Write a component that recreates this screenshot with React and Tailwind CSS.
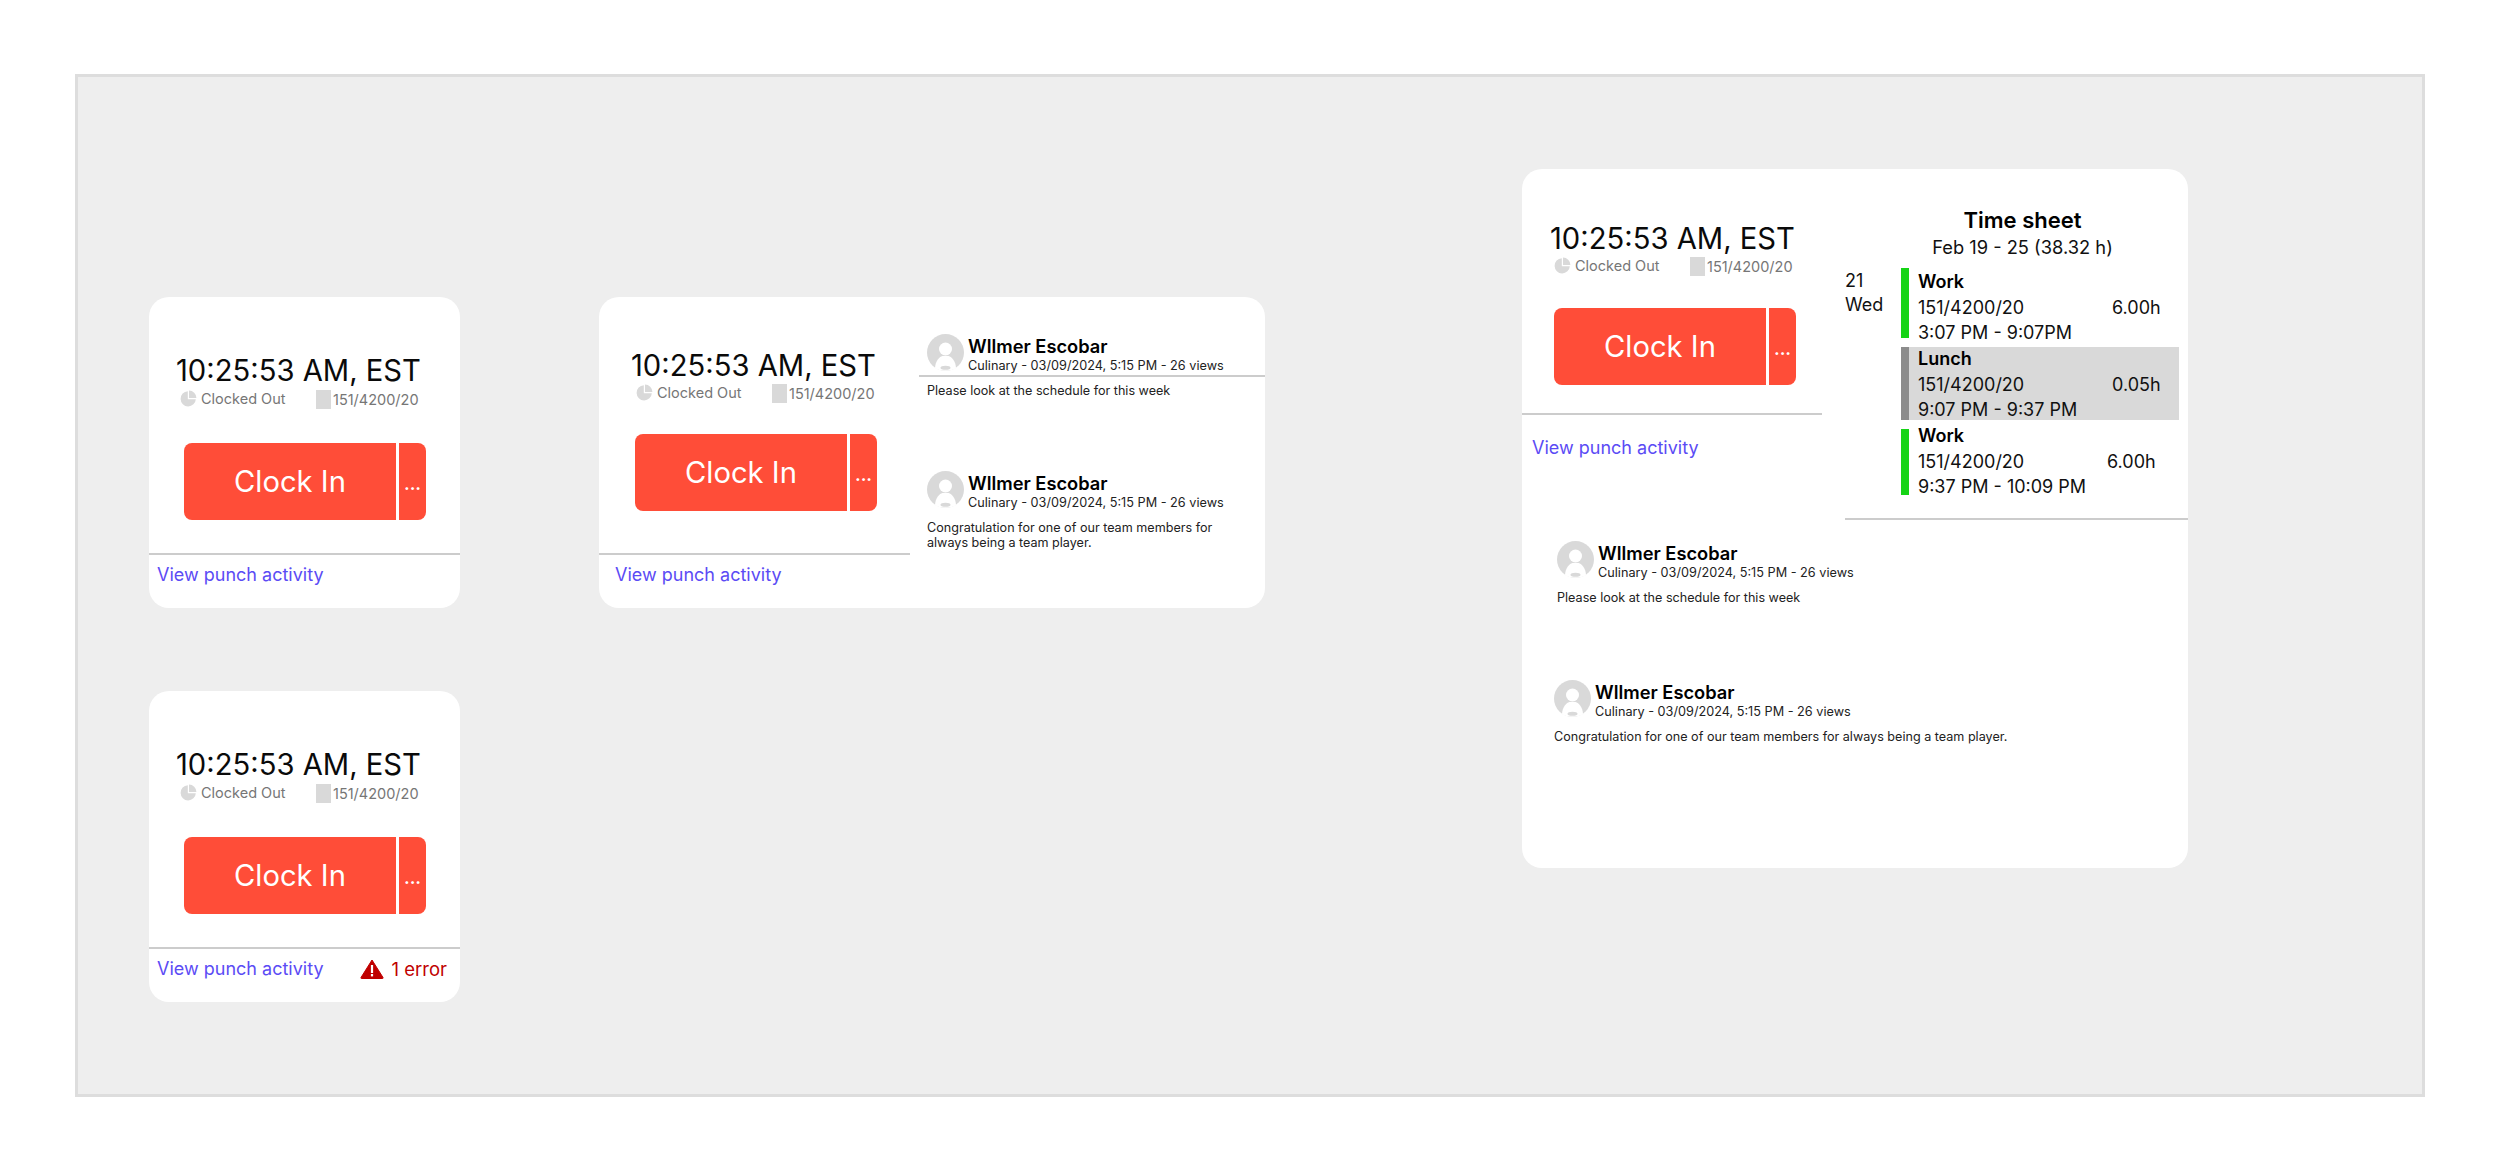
const PieIcon = () => (
    <svg width="17" height="17" viewBox="0 0 17 17" className="shrink-0">
        <path d="M7.8 1.2 A7.6 7.6 0 1 0 15.8 9.2 H7.8 Z" fill="#d9d9d9" />
        <path d="M9 0.6 A7.6 7.6 0 0 1 16.4 8 H9 Z" fill="#d9d9d9" />
    </svg>
)

const Avatar = () => (
    <svg width="37" height="37" viewBox="0 0 37 37" className="shrink-0">
        <circle cx="18.5" cy="18.5" r="18.5" fill="#d9d9d9" />
        <circle cx="18.5" cy="15" r="6.5" fill="#ffffff" />
        <path d="M8 34 C8.5 27 12 23 15.5 22 H21.5 C25 23 28.5 27 29 34 C25 37.5 12 37.5 8 34 Z" fill="#ffffff" />
        <ellipse cx="18.5" cy="33.8" rx="5" ry="2" fill="#d9d9d9" />
    </svg>
)

const WarningIcon = () => (
    <svg width="24" height="20" viewBox="0 0 24 20" className="shrink-0">
        <path d="M12 1 L23 18.5 Q23.4 19.5 22.4 19.5 H1.6 Q0.6 19.5 1 18.5 Z" fill="#c00000" stroke="#c00000" strokeLinejoin="round" />
        <rect x="10.9" y="6" width="2.2" height="8" fill="#ffffff" />
        <rect x="10.9" y="15" width="2.2" height="2.4" fill="#ffffff" />
    </svg>
)

const ClockPanel = ({ className, topClass, timeClass, metaClass, buttonClass, footerClass, error }) => (
    <div className={`flex flex-col shrink-0 ${className}`}>
        <div className={topClass}>
            <div className={`text-[29.2px] leading-[36px] text-[#0a0a0a] whitespace-nowrap ${timeClass}`}>10:25:53 AM, EST</div>
            <div className={`flex items-start h-[20px] text-[14.5px] text-[#767676] ${metaClass}`}>
                <div className="flex items-center w-[136px] h-[17px] gap-[4px] leading-[17px]">
                    <PieIcon />
                    <span className="-mt-[1px]">Clocked Out</span>
                </div>
                <div className="flex items-end gap-[2px]">
                    <div className="w-[15px] h-[19px] bg-[#d9d9d9]" />
                    <span className="leading-[19px]">151/4200/20</span>
                </div>
            </div>
            <div className={`flex gap-[3px] h-[77px] text-white ${buttonClass}`}>
                <div className="w-[212px] rounded-l-[8px] bg-[#ff4d38] flex items-center justify-center text-[29.2px]">Clock In</div>
                <div className="w-[27px] rounded-r-[8px] bg-[#ff4d38] flex items-center justify-center text-[18px] font-semibold pt-[3px]">...</div>
            </div>
        </div>
        <div className="h-[2px] bg-[#cccccc]" />
        <div className={`flex items-center justify-between text-[18px] leading-[22px] ${footerClass}`}>
            <span className="text-[#5b4bf5]">View punch activity</span>
            {error && (
                <span className="flex items-center gap-[8px] text-[18.5px] text-[#c00000]">
                    <WarningIcon />
                    1 error
                </span>
            )}
        </div>
    </div>
)

const Message = ({ body, ruled, className = "" }) => (
    <div className={className}>
        <div className="flex gap-[4px]">
            <Avatar />
            <div className="pt-[1px]">
                <div className="text-[18.3px] leading-[22px] font-semibold text-black whitespace-nowrap">Wllmer Escobar</div>
                <div className="text-[12.7px] leading-[18px] text-[#222222] whitespace-nowrap">Culinary - 03/09/2024, 5:15 PM - 26 views</div>
            </div>
        </div>
        {ruled && <div className="-ml-[8px] h-[2px] bg-[#cccccc]" />}
        <p className={`text-[12.6px] leading-[15px] text-[#222222] ${ruled ? "mt-[6px]" : "mt-[8px]"}`}>{body}</p>
    </div>
)

const TimeEntry = ({ title, hours, range, barClass, boxClass, textClass, hoursClass }) => (
    <div className={`flex ${boxClass}`}>
        <div className={`w-[8px] shrink-0 ${barClass}`} />
        <div className={`pl-[9px] text-[18px] leading-[25.5px] text-[#111111] ${textClass}`}>
            <div className="font-semibold text-black">{title}</div>
            <div className="flex">
                <span className={hoursClass}>151/4200/20</span>
                <span>{hours}</span>
            </div>
            <div className="whitespace-nowrap">{range}</div>
        </div>
    </div>
)

export default function App() {
    return (
        <div className="min-h-screen bg-white font-[Inter,sans-serif] pt-[74px] pl-[75px]">
            <div className="flex items-start w-[2350px] h-[1023px] border-[3px] border-[#dddddd] bg-[#eeeeee]">
                <div className="flex flex-col gap-[83px] ml-[71px] mt-[220px]">
                    <div className="w-[311px] h-[311px] rounded-[20px] bg-white overflow-hidden">
                        <ClockPanel
                            className="w-[311px]"
                            topClass="h-[256px]"
                            timeClass="pt-[56px] pl-[27px]"
                            metaClass="pl-[31px] mt-[1px]"
                            buttonClass="ml-[35px] mt-[33px]"
                            footerClass="pl-[8px] pt-[9px] pr-[13px]"
                        />
                    </div>
                    <div className="w-[311px] h-[311px] rounded-[20px] bg-white overflow-hidden">
                        <ClockPanel
                            className="w-[311px]"
                            topClass="h-[256px]"
                            timeClass="pt-[56px] pl-[27px]"
                            metaClass="pl-[31px] mt-[1px]"
                            buttonClass="ml-[35px] mt-[33px]"
                            footerClass="pl-[8px] pt-[9px] pr-[13px]"
                            error
                        />
                    </div>
                </div>

                <div className="flex w-[666px] h-[311px] ml-[139px] mt-[220px] rounded-[20px] bg-white overflow-hidden">
                    <ClockPanel
                        className="w-[311px]"
                        topClass="h-[256px]"
                        timeClass="pt-[51px] pl-[32px]"
                        metaClass="pl-[37px]"
                        buttonClass="ml-[36px] mt-[30px]"
                        footerClass="pl-[16px] pt-[9px]"
                    />
                    <div className="flex-1 pl-[17px] pt-[37px]">
                        <Message ruled body="Please look at the schedule for this week" />
                        <Message className="mt-[73px] w-[300px]" body="Congratulation for one of our team members for always being a team player." />
                    </div>
                </div>

                <div className="w-[666px] h-[699px] ml-[257px] mt-[92px] rounded-[20px] bg-white overflow-hidden">
                    <div className="flex h-[351px]">
                        <ClockPanel
                            className="w-[300px]"
                            topClass="h-[244px]"
                            timeClass="pt-[52px] pl-[28px]"
                            metaClass="pl-[32px]"
                            buttonClass="ml-[32px] mt-[31px]"
                            footerClass="pl-[10px] pt-[22px]"
                        />
                        <div className="flex flex-col w-[343px] ml-[23px]">
                            <div className="pt-[37px] text-center pl-[12px]">
                                <div className="text-[22px] leading-[28px] font-semibold text-black">Time sheet</div>
                                <div className="text-[18.3px] leading-[26px] text-[#111111]">Feb 19 - 25 (38.32 h)</div>
                            </div>
                            <div className="flex mt-[8px]">
                                <div className="w-[56px] pt-[1px] text-[18px] leading-[24px] text-[#111111]">
                                    <div>21</div>
                                    <div>Wed</div>
                                </div>
                                <div className="flex flex-col gap-[9px] w-[278px]">
                                    <TimeEntry title="Work" hours="6.00h" range="3:07 PM - 9:07PM" barClass="bg-[#16d416]" boxClass="h-[70px]" textClass="mt-[1px]" hoursClass="w-[194px]" />
                                    <TimeEntry title="Lunch" hours="0.05h" range="9:07 PM - 9:37 PM" barClass="bg-[#8c8c8c]" boxClass="h-[73px] bg-[#d9d9d9]" textClass="-mt-[1px]" hoursClass="w-[194px]" />
                                    <TimeEntry title="Work" hours="6.00h" range="9:37 PM - 10:09 PM" barClass="bg-[#16d416]" boxClass="h-[66px]" textClass="-mt-[6px]" hoursClass="w-[189px]" />
                                </div>
                            </div>
                            <div className="mt-auto h-[2px] bg-[#cccccc]" />
                        </div>
                    </div>
                    <Message className="mt-[21px] ml-[35px]" body="Please look at the schedule for this week" />
                    <Message className="mt-[75px] ml-[32px]" body="Congratulation for one of our team members for always being a team player." />
                </div>
            </div>
        </div>
    )
}
